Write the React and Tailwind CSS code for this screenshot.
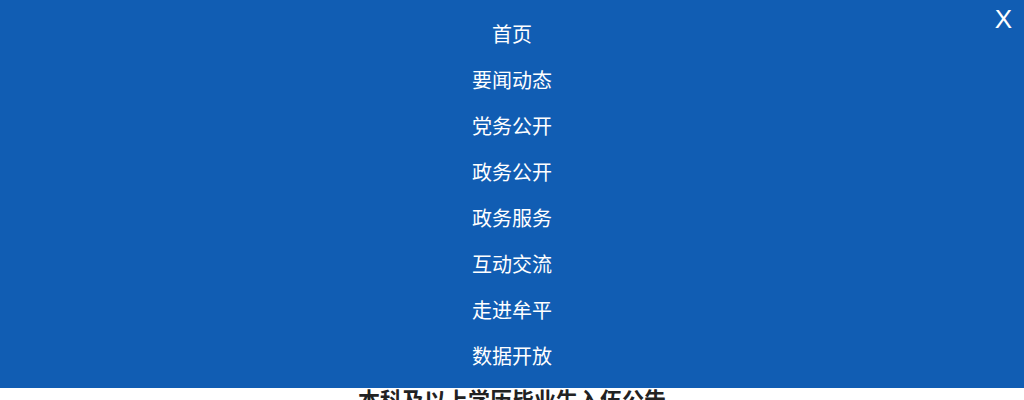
import React from "react";

const items = ["首页", "要闻动态", "党务公开", "政务公开", "政务服务", "互动交流", "走进牟平", "数据开放"];

export default function App() {
  return (
    <div className="relative w-[1024px] h-[400px] overflow-hidden bg-white" style={{ fontFamily: '"Noto Sans CJK SC", "Liberation Sans", sans-serif' }}>
      <nav className="bg-[#115db3] h-[388px] pt-[11px]">
        <ul className="flex flex-col items-center">
          {items.map((t) => (
            <li key={t} className="h-[46px] leading-[46px] text-[20px] text-white">{t}</li>
          ))}
        </ul>
      </nav>
      <button className="absolute top-[5px] right-[12px] text-white text-[26px] leading-[28px]" style={{ fontFamily: '"Liberation Sans", Arial, sans-serif' }}>X</button>
      <h1 className="text-center font-bold text-[22px] leading-[18px] text-[#222] mt-[1px]">本科及以上学历毕业生入伍公告</h1>
    </div>
  );
}
